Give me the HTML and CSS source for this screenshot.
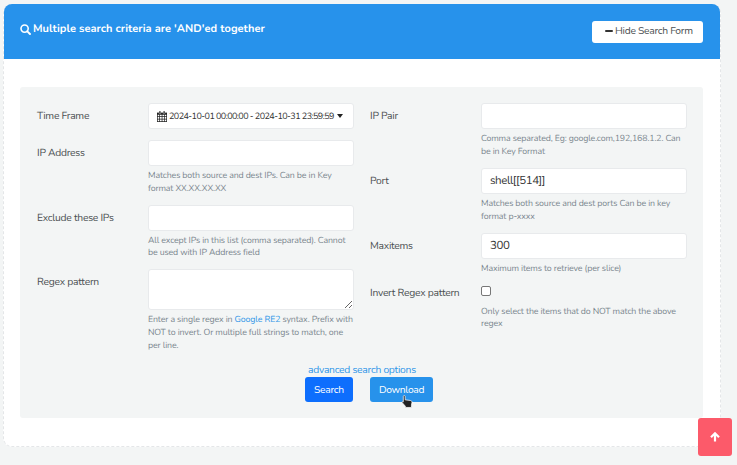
FILE: index.html
```html
<!DOCTYPE html>
<html lang="en">
<head>
<meta charset="utf-8">
<title>Search criteria</title>
<link rel="stylesheet" href="styles.css">
</head>
<body>
<main class="card">
  <header class="card-header">
    <h1 class="title">
      <svg class="icon-search" viewBox="0 0 11 11"><circle cx="4.6" cy="4.6" r="3.6" fill="none" stroke="currentColor" stroke-width="1.6"/><path d="M7.3 7.3 10 10" stroke="currentColor" stroke-width="1.9" stroke-linecap="round"/></svg>
      <span>Multiple search criteria are 'AND'ed together</span>
    </h1>
    <button class="btn-hide" type="button"><span class="minus"></span><span>Hide Search Form</span></button>
  </header>
  <form class="panel">
    <div class="columns">
      <div class="column">
        <div class="row row-time">
          <label class="label">Time Frame</label>
          <div class="date-range">
            <svg class="icon-calendar" viewBox="0 0 10 11"><path d="M0 1.6h10V11H0z" fill="#222"/><path d="M2.1 0h1.6v2.6H2.1zM6.3 0h1.6v2.6H6.3z" fill="#222" stroke="#fff" stroke-width=".35"/><path d="M.7 3.8h1.6v1.5H.7zm2.3 0h1.7v1.5H3zm2.4 0h1.7v1.5H5.4zm2.4 0h1.5v1.5H7.8zM.7 6h1.6v1.7H.7zM3 6h1.7v1.7H3zm2.4 0h1.7v1.7H5.4zm2.4 0h1.5v1.7H7.8zM.7 8.4h1.6v1.8H.7zm2.3 0h1.7v1.8H3zm2.4 0h1.7v1.8H5.4zm2.4 0h1.5v1.8H7.8z" fill="#fff"/></svg>
            <span class="date-text">2024-10-01 00:00:00 - 2024-10-31 23:59:59</span>
            <span class="caret"></span>
          </div>
        </div>
        <div class="row row-help">
          <label class="label" for="ip">IP Address</label>
          <div><input class="input" id="ip" type="text">
          <p class="help">Matches both source and dest IPs. Can be in Key<br>format XX.XX.XX.XX</p></div>
        </div>
        <div class="row row-help">
          <label class="label" for="exclude">Exclude these IPs</label>
          <div><input class="input" id="exclude" type="text">
          <p class="help">All except IPs in this list (comma separated). Cannot<br>be used with IP Address field</p></div>
        </div>
        <div class="row">
          <label class="label" for="regex">Regex pattern</label>
          <div><textarea class="input textarea" id="regex"></textarea>
          <p class="help">Enter a single regex in <a class="link" href="#">Google RE2</a> syntax. Prefix with<br>NOT to invert. Or multiple full strings to match, one<br>per line.</p></div>
        </div>
      </div>
      <div class="column">
        <div class="row row-pair">
          <label class="label" for="pair">IP Pair</label>
          <div><input class="input" id="pair" type="text">
          <p class="help">Comma separated, Eg: google.com,192,168.1.2. Can<br>be in Key Format</p></div>
        </div>
        <div class="row row-help">
          <label class="label" for="port">Port</label>
          <div><input class="input" id="port" type="text" value="shell[[514]]">
          <p class="help">Matches both source and dest ports Can be in key<br>format p-xxxx</p></div>
        </div>
        <div class="row row-max">
          <label class="label" for="max">Maxitems</label>
          <div><input class="input" id="max" type="text" value="300">
          <p class="help">Maximum items to retrieve (per slice)</p></div>
        </div>
        <div class="row">
          <label class="label" for="invert">Invert Regex pattern</label>
          <div><input class="checkbox" id="invert" type="checkbox">
          <p class="help">Only select the items that do NOT match the above<br>regex</p></div>
        </div>
      </div>
    </div>
    <div class="actions">
      <a class="link advanced" href="#">advanced search options</a>
      <div class="buttons">
        <button class="btn btn-search" type="button">Search</button>
        <button class="btn btn-download" type="button">Download
          <svg class="cursor" viewBox="0 0 12 14"><path d="M2 1.5c0-1.2 2-1.2 2 0v3.7l5.6.7c1.2.2 1.8.8 1.8 1.8L10.8 11v2.4H4.2V12L.9 8.3c-.6-.9.4-1.6 1.1-.9z" fill="#222" stroke="#fff" stroke-width=".8"/></svg>
        </button>
      </div>
    </div>
  </form>
</main>
<a class="to-top" href="#"><svg class="icon-up" viewBox="0 0 10 10"><path d="M5 9.5V1.6M1 5.2l4-3.9 4 3.9" fill="none" stroke="#fff" stroke-width="2.2"/></svg></a>
</body>
</html>
```
FILE: styles.css
```css
* { box-sizing: border-box; }
body {
  margin: 0;
  height: 465px;
  overflow: hidden;
  padding: 4px 0 0 3px;
  background: #f3f5f5;
  color: #4b5052;
  font-family: Nunito, Lato, "Open Sans", sans-serif;
  font-size: 10.3px;
  letter-spacing: -.26px;
  text-rendering: geometricPrecision;
}
.card {
  width: 718px;
  height: 443px;
  border: 1px dashed #e4e6e8;
  border-radius: 9px;
  background: #fff;
}
.card-header {
  display: flex;
  justify-content: space-between;
  align-items: flex-start;
  height: 55px;
  margin-top: -1px;
  padding: 17px 17px 0 16px;
  border-radius: 8px 8px 0 0;
  background: #2792eb;
}
.title {
  display: flex;
  align-items: center;
  gap: 2px;
  height: 15px;
  margin: 0;
  color: #fff;
  font-size: 11px;
  font-weight: 700;
  letter-spacing: .06px;
  white-space: nowrap;
}
.icon-search { width: 11px; height: 11px; margin-top: 2px; }
.btn-hide {
  display: flex;
  align-items: center;
  gap: 2px;
  width: 111px;
  height: 22px;
  padding: 0 0 2px 13px;
  border: 0;
  border-radius: 3px;
  background: #fff;
  color: #4b4f52;
  font: inherit;
  letter-spacing: -.28px;
  white-space: nowrap;
}
.minus { width: 8px; height: 2.5px; border-radius: 1px; background: #333; }
.panel {
  height: 331px;
  margin: 28px 17px 0 16px;
  padding: 16px 17px 0;
  border-radius: 3px;
  background: #f3f5f5;
}
.columns { display: flex; gap: 17px; height: 260px; }
.row {
  display: grid;
  grid-template-columns: 111px 205px;
  align-items: start;
}
.row-time { height: 37px; }
.row-help { height: 64.5px; }
.row-pair { height: 65px; }
.row-max { height: 47px; }
.label { padding-top: 5px; line-height: 16px; white-space: nowrap; }
.input, .date-range {
  display: block;
  width: 205.5px;
  height: 26px;
  border: 1px solid #e8eaec;
  border-radius: 3px;
  background: #fff;
}
.input {
  padding: 0 8px;
  color: #333;
  font: 11.5px Nunito, Lato, sans-serif;
  letter-spacing: -.42px;
  text-rendering: geometricPrecision;
}
.textarea { height: 41px; resize: vertical; }
.date-range {
  display: flex;
  align-items: center;
  padding-left: 8px;
  color: #333;
  font-size: 9px;
  letter-spacing: -.56px;
  white-space: nowrap;
}
.icon-calendar { flex: none; width: 10px; height: 11px; margin-right: 2px; }
.date-text { padding-top: 1px; }
.caret {
  margin-left: 3px;
  border: 3.5px solid transparent;
  border-top: 4px solid #222;
  border-bottom: 0;
}
.help {
  margin: 4px 0 0;
  color: #7b878f;
  font-size: 8.8px;
  line-height: 12.9px;
  letter-spacing: -.14px;
  white-space: nowrap;
}
.link { color: #2f96e8; text-decoration: none; }
.checkbox {
  display: block;
  appearance: none;
  width: 10px;
  height: 10px;
  margin: 6px 0 10px;
  border: 1px solid #777;
  border-radius: 2px;
  background: #fff;
}
.actions { padding-left: 268px; }
.advanced {
  display: block;
  padding-left: 3px;
  line-height: 14px;
  white-space: nowrap;
}
.buttons { display: flex; gap: 17px; }
.btn {
  position: relative;
  height: 25px;
  padding: 0;
  border: 0;
  border-radius: 3px;
  color: #fff;
  font: inherit;
  letter-spacing: -.26px;
}
.btn-search { width: 48px; background: #0d6efd; }
.btn-download { width: 63px; background: #2792eb; letter-spacing: -.36px; }
.cursor { position: absolute; left: 31px; top: 18px; width: 12px; height: 13px; }
.to-top {
  position: fixed;
  left: 698px;
  top: 418px;
  display: flex;
  align-items: center;
  justify-content: center;
  width: 34px;
  height: 38px;
  border-radius: 3px;
  background: #fc5a6a;
}
.icon-up { width: 10px; height: 10px; }
```
